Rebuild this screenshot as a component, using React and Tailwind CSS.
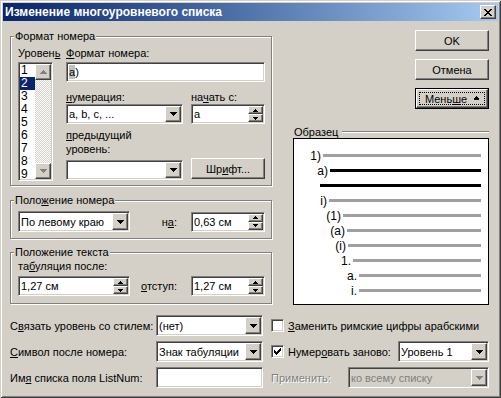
import React from 'react';

const sunken =
  'border border-t-[#808080] border-l-[#808080] border-r-white border-b-white shadow-[inset_1px_1px_#404040,inset_-1px_-1px_#d4d0c8]';
const raised =
  'border border-t-white border-l-white border-r-[#404040] border-b-[#404040] shadow-[inset_-1px_-1px_#808080] bg-[#d4d0c8]';

// pixel arrows, classic style
const Down = ({ color = '#000' }) => (
  <svg width="7" height="4" viewBox="0 0 7 4" shapeRendering="crispEdges">
    <path fill={color} d="M0 0h7v1H0zM1 1h5v1H1zM2 2h3v1H2zM3 3h1v1H3z" />
  </svg>
);
const Up = ({ color = '#000' }) => (
  <svg width="7" height="4" viewBox="0 0 7 4" shapeRendering="crispEdges">
    <path fill={color} d="M3 0h1v1H3zM2 1h3v1H2zM1 2h5v1H1zM0 3h7v1H0z" />
  </svg>
);
const SmallUp = () => (
  <svg width="5" height="3" viewBox="0 0 5 3" shapeRendering="crispEdges">
    <path fill="#000" d="M2 0h1v1H2zM1 1h3v1H1zM0 2h5v1H0z" />
  </svg>
);
const SmallDown = () => (
  <svg width="5" height="3" viewBox="0 0 5 3" shapeRendering="crispEdges">
    <path fill="#000" d="M0 0h5v1H0zM1 1h3v1H1zM2 2h1v1H2z" />
  </svg>
);

const Combo = ({ value, className = '', h = 'h-[20px]', disabled }) => (
  <div className={`${sunken} ${disabled ? 'bg-[#d4d0c8]' : 'bg-white'} ${h} p-[1px] flex ${className}`}>
    <span className={`flex-1 flex items-center pl-[1px] whitespace-nowrap overflow-hidden ${disabled ? 'text-[#808080]' : ''}`}>
      {value}
    </span>
    <span className={`${raised} w-[16px] flex items-center justify-center`}>
      <Down color={disabled ? '#808080' : '#000'} />
    </span>
  </div>
);

const Spin = ({ value, className = '' }) => (
  <div className={`${sunken} bg-white h-[20px] p-[1px] flex ${className}`}>
    <span className="flex-1 flex items-center pl-[1px] whitespace-nowrap">{value}</span>
    <span className="w-[15px] flex flex-col">
      <span className={`${raised} h-[8px] flex items-center justify-center`}>
        <SmallUp />
      </span>
      <span className={`${raised} flex-1 flex items-center justify-center`}>
        <SmallDown />
      </span>
    </span>
  </div>
);

const Button = ({ children, className = '', isDefault }) =>
  isDefault ? (
    <div className={`border border-black h-[21px] ${className}`}>
      <div className={`${raised} h-full p-[2px]`}>
        <div className="h-full border border-dotted border-black flex items-center justify-center">{children}</div>
      </div>
    </div>
  ) : (
    <div className={`${raised} h-[21px] flex items-center justify-center ${className}`}>{children}</div>
  );

const Check = ({ checked }) => (
  <span className={`${sunken} bg-white w-[13px] h-[13px] flex items-center justify-center shrink-0`}>
    {checked && (
      <svg width="7" height="7" viewBox="0 0 7 7" shapeRendering="crispEdges">
        <path fill="#000" d="M6 0h1v1H6zM5 1h2v1H5zM0 2h1v1H0zM4 2h3v1H4zM0 3h2v1H0zM3 3h3v1H3zM0 4h5v1H0zM1 5h3v1H1zM2 6h1v1H2z" />
      </svg>
    )}
  </span>
);

const Group = ({ title, className = '', children }) => (
  <fieldset className={`border border-[#808080] shadow-[inset_1px_1px_#fff,1px_1px_#fff] p-0 m-0 min-w-0 ${className}`}>
    <legend className="ml-[3px] px-[1px] leading-[13px] bg-[#d4d0c8]">{title}</legend>
    {children}
  </fieldset>
);

const sample = [
  { n: '1)', w: 27, dark: false },
  { n: 'a)', w: 34, dark: true },
  { n: '', w: 24, dark: true },
  { n: 'i)', w: 33, dark: false },
  { n: '(1)', w: 47, dark: false },
  { n: '(a)', w: 51, dark: false },
  { n: '(i)', w: 52, dark: false },
  { n: '1.', w: 57, dark: false },
  { n: 'a.', w: 63, dark: false },
  { n: 'i.', w: 63, dark: false },
];

export default function App() {
  return (
    <div className="w-[501px] h-[398px] bg-[#d4d0c8] p-[3px] shadow-[inset_1px_1px_#d4d0c8,inset_-1px_-1px_#404040,inset_2px_2px_#fff,inset_-2px_-2px_#808080] font-['Liberation_Sans',Arial,sans-serif] text-[11px] leading-[14px] text-black select-none">
      {/* title bar */}
      <div className="h-[18px] bg-gradient-to-r from-[#0a246a] to-[#a6caf0] flex items-center pl-[2px] pr-[2px]">
        <span className="flex-1 text-white font-bold text-[12px]">Изменение многоуровневого списка</span>
        <span className={`${raised} w-[16px] h-[14px] flex items-center justify-center`}>
          <svg width="8" height="7" viewBox="0 0 8 7" shapeRendering="crispEdges">
            <path fill="#000" d="M0 0h2v1H0zM6 0h2v1H6zM1 1h2v1H1zM5 1h2v1H5zM2 2h4v1H2zM3 3h2v1H3zM2 4h4v1H2zM1 5h2v1H1zM5 5h2v1H5zM0 6h2v1H0zM6 6h2v1H6z" />
          </svg>
        </span>
      </div>

      <div className="pl-[7px]">
        <div className="flex">
          {/* left column */}
          <div className="w-[262px]">
            <Group title="Формат номера" className="mt-[9px]">
              <div className="flex pt-[3px] pl-[7px] pr-[6px] pb-[4px]">
                <div className="w-[35px]">
                  <div>
                    Уровен<u>ь</u>
                  </div>
                  <div className={`${sunken} bg-white h-[119px] mt-[2px] p-[1px] flex overflow-hidden`}>
                    <div className="flex-1 flex flex-col text-[12px]">
                      {[1, 2, 3, 4, 5, 6, 7, 8, 9].map((n) => (
                        <div
                          key={n}
                          className={`h-[13px] leading-[13px] pl-[1px] shrink-0 ${n === 2 ? 'bg-[#0a246a] text-white' : ''}`}
                        >
                          {n}
                        </div>
                      ))}
                    </div>
                    <div className="w-[16px] flex flex-col">
                      <div className={`${raised} h-[16px] flex items-center justify-center`}>
                        <Up color="#808080" />
                      </div>
                      <div className="flex-1 bg-[image:repeating-conic-gradient(#fff_0%_25%,#d4d0c8_0%_50%)] bg-[length:2px_2px]" />
                      <div className={`${raised} h-[16px] flex items-center justify-center`}>
                        <Down color="#808080" />
                      </div>
                    </div>
                  </div>
                </div>
                <div className="ml-[13px] w-[199px]">
                  <div>
                    <u>Ф</u>ормат номера:
                  </div>
                  <div className={`${sunken} bg-white h-[20px] mt-[2px] flex items-center pl-[2px]`}>
                    <span className="bg-[#c0c0c0]">a</span>)
                  </div>
                  <div className="flex mt-[8px]">
                    <div className="w-[117px]">
                      <div>
                        <u>н</u>умерация:
                      </div>
                      <Combo value="a, b, c, ..." />
                      <div className="mt-[4px]">
                        <u>п</u>редыдущий
                        <br />
                        уровень:
                      </div>
                      <Combo value="" className="mt-[4px]" />
                    </div>
                    <div className="ml-[8px] w-[74px]">
                      <div>
                        на<u>ч</u>ать с:
                      </div>
                      <Spin value="a" />
                      <Button className="mt-[34px] h-[20px]">
                        Шр<u>и</u>фт...
                      </Button>
                    </div>
                  </div>
                </div>
              </div>
            </Group>

            <Group
              title={
                <>
                  Поло<u>ж</u>ение номера
                </>
              }
              className="mt-[8px]"
            >
              <div className="flex items-center pt-[4px] pl-[7px] pr-[6px] pb-[6px]">
                <Combo value="По левому краю" className="w-[112px]" h="h-[21px]" />
                <span className="ml-auto mr-[14px]">
                  н<u>а</u>:
                </span>
                <Spin value="0,63 см" className="w-[74px]" />
              </div>
            </Group>

            <Group title="Положение текста" className="mt-[7px]">
              <div className="pt-[0px] pl-[7px] pr-[6px] pb-[7px]">
                <div>
                  та<u>б</u>уляция после:
                </div>
                <div className="flex items-center mt-[3px]">
                  <Spin value="1,27 см" className="w-[112px]" />
                  <span className="ml-auto mr-[14px]">
                    <u>о</u>тступ:
                  </span>
                  <Spin value="1,27 см" className="w-[74px]" />
                </div>
              </div>
            </Group>
          </div>

          {/* right column */}
          <div className="ml-[21px] w-[196px] flex flex-col">
            <Button className="ml-auto w-[74px] mt-[9px]">OK</Button>
            <Button className="ml-auto w-[74px] mt-[8px]">Отмена</Button>
            <Button className="ml-auto w-[74px] mt-[8px]" isDefault>
              <span>
                Мень<u>ш</u>е
              </span>
              <span className="ml-[7px] mb-[1px]">
                <SmallUp />
                <svg width="5" height="1" className="block">
                  <rect width="5" height="1" fill="#000" />
                </svg>
              </span>
            </Button>
            <div className="flex items-center mt-[16px] h-[13px]">
              <span className="pl-[1px]">Образец</span>
              <span className="flex-1 ml-[4px] h-[2px] border-t border-t-[#808080] border-b border-b-white" />
            </div>
            <div className="border border-black bg-white h-[167px] pt-[9px] pr-[7px] text-[12px]">
              {sample.map((r, i) => (
                <div key={i} className="flex items-center h-[15px]">
                  <span className="text-right shrink-0" style={{ width: r.w }}>
                    {r.n}
                  </span>
                  <span className={`flex-1 ml-[2px] h-[3px] ${r.dark ? 'bg-black' : 'bg-[#a0a0a0]'}`} />
                </div>
              ))}
            </div>
          </div>
        </div>

        {/* bottom rows */}
        <div className="w-[479px] mt-[10px] flex flex-col gap-[5px]">
          <div className="flex items-center h-[21px]">
            <span className="w-[146px]">
              С<u>в</u>язать уровень со стилем:
            </span>
            <Combo value="(нет)" className="w-[107px]" h="h-[21px]" />
            <span className="ml-[8px]">
              <Check />
            </span>
            <span className="ml-[4px]">
              <u>З</u>аменить римские цифры арабскими
            </span>
          </div>
          <div className="flex items-center h-[21px]">
            <span className="w-[146px]">
              <u>С</u>имвол после номера:
            </span>
            <Combo value="Знак табуляции" className="w-[107px]" h="h-[21px]" />
            <span className="ml-[8px]">
              <Check checked />
            </span>
            <span className="ml-[4px]">
              Нумер<u>о</u>вать заново:
            </span>
            <Combo value="Уровень 1" className="w-[91px] ml-auto" h="h-[21px]" />
          </div>
          <div className="flex items-center h-[21px]">
            <span className="w-[146px]">
              Им<u>я</u> списка поля ListNum:
            </span>
            <div className={`${sunken} bg-white w-[107px] h-[21px]`} />
            <span className="ml-[8px] text-[#808080] [text-shadow:1px_1px_#fff]">Применить:</span>
            <Combo value="ко всему списку" className="w-[141px] ml-auto" h="h-[21px]" disabled />
          </div>
        </div>
      </div>
    </div>
  );
}
